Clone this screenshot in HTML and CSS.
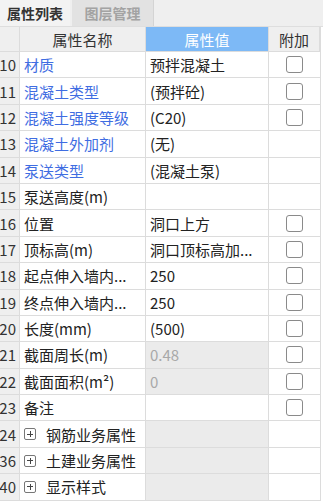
FILE: index.html
```html
<!DOCTYPE html>
<html>
<head>
<meta charset="utf-8">
<link rel="stylesheet" href="styles.css">
</head>
<body>
<div class="tabs">
  <div class="tab active">属性列表</div>
  <div class="tab">图层管理</div>
</div>
<div class="grid">
  <div class="c num hd"></div>
  <div class="c hd center">属性名称</div>
  <div class="c hd center sel">属性值</div>
  <div class="c hd center">附加</div>

  <div class="c num">10</div><div class="c name blue">材质</div><div class="c val">预拌混凝土</div><div class="c add"><span class="cb"></span></div>
  <div class="c num">11</div><div class="c name blue">混凝土类型</div><div class="c val">(预拌砼)</div><div class="c add"><span class="cb"></span></div>
  <div class="c num">12</div><div class="c name blue">混凝土强度等级</div><div class="c val">(C20)</div><div class="c add"><span class="cb"></span></div>
  <div class="c num">13</div><div class="c name blue">混凝土外加剂</div><div class="c val">(无)</div><div class="c add"></div>
  <div class="c num">14</div><div class="c name blue">泵送类型</div><div class="c val">(混凝土泵)</div><div class="c add"></div>
  <div class="c num">15</div><div class="c name">泵送高度(m)</div><div class="c val"></div><div class="c add"></div>
  <div class="c num">16</div><div class="c name">位置</div><div class="c val">洞口上方</div><div class="c add"><span class="cb"></span></div>
  <div class="c num">17</div><div class="c name">顶标高(m)</div><div class="c val">洞口顶标高加...</div><div class="c add"><span class="cb"></span></div>
  <div class="c num">18</div><div class="c name">起点伸入墙内...</div><div class="c val">250</div><div class="c add"><span class="cb"></span></div>
  <div class="c num">19</div><div class="c name">终点伸入墙内...</div><div class="c val">250</div><div class="c add"><span class="cb"></span></div>
  <div class="c num">20</div><div class="c name">长度(mm)</div><div class="c val">(500)</div><div class="c add"><span class="cb"></span></div>
  <div class="c num">21</div><div class="c name">截面周长(m)</div><div class="c val ro">0.48</div><div class="c add"><span class="cb"></span></div>
  <div class="c num">22</div><div class="c name">截面面积(m²)</div><div class="c val ro">0</div><div class="c add"><span class="cb"></span></div>
  <div class="c num">23</div><div class="c name">备注</div><div class="c val"></div><div class="c add"><span class="cb"></span></div>
  <div class="c num">24</div><div class="c name"><span class="plus"></span>钢筋业务属性</div><div class="c val ro"></div><div class="c add"></div>
  <div class="c num">36</div><div class="c name"><span class="plus"></span>土建业务属性</div><div class="c val ro"></div><div class="c add"></div>
  <div class="c num">40</div><div class="c name"><span class="plus"></span>显示样式</div><div class="c val ro"></div><div class="c add"></div>
</div>
</body>
</html>
```
FILE: styles.css
```css
html, body {
  margin: 0;
  padding: 0;
  background: #ffffff;
  font-family: "Noto Sans CJK SC", "Noto Sans", sans-serif;
  font-size: 15px;
  color: #222;
}
.tabs {
  display: flex;
  height: 26px;
  background: #efefef;
  border-bottom: 1px solid #dedede;
  gap: 2px;
}
.tab {
  height: 26px;
  line-height: 26px;
  font-size: 14px;
  font-weight: bold;
  color: #a3a3a3;
  background: #e2e2e2;
  width: 82px;
  text-align: center;
  box-sizing: border-box;
  border-right: 1px solid #d4d4d4;
}
.tab.active {
  width: 70px;
  color: #333;
  background: #f3f3f3;
  border-right: none;
}
.grid {
  display: grid;
  grid-template-columns: 20px 126px 123px 51px;
  grid-template-rows: 25px;
  grid-auto-rows: 26.4px;
  width: 321px;
  border-right: 1px solid #dcdcdc;
  box-sizing: border-box;
}
.c {
  border-right: 1px solid #dcdcdc;
  border-bottom: 1px solid #dcdcdc;
  display: flex;
  align-items: center;
  overflow: hidden;
  white-space: nowrap;
  min-width: 0;
}
.c.add { border-right: none; justify-content: center; }
.hd {
  background: #efefef;
  color: #333;
}
.center { justify-content: center; }
.hd.sel {
  background: #7db9f6;
  color: #fff;
}
.num {
  background: #efefef;
  justify-content: flex-end;
  padding-right: 3px;
  font-size: 15px;
  color: #333;
}
.name { padding-left: 4px; }
.blue { color: #3f6de2; }
.val { padding-left: 4px; }
.val.ro { background: #ebebeb; color: #a8a8a8; }
.cb {
  width: 15px;
  height: 15px;
  border: 1px solid #8a8a8a;
  border-radius: 3px;
  background: #fff;
}
.plus {
  position: relative;
  width: 10px;
  height: 10px;
  border: 1px solid #777;
  border-radius: 2px;
  margin-right: 10px;
  flex: none;
}
.plus::before, .plus::after {
  content: "";
  position: absolute;
  background: #444;
}
.plus::before { left: 2px; top: 4.5px; width: 6px; height: 1px; }
.plus::after { left: 4.5px; top: 2px; width: 1px; height: 6px; }
```
